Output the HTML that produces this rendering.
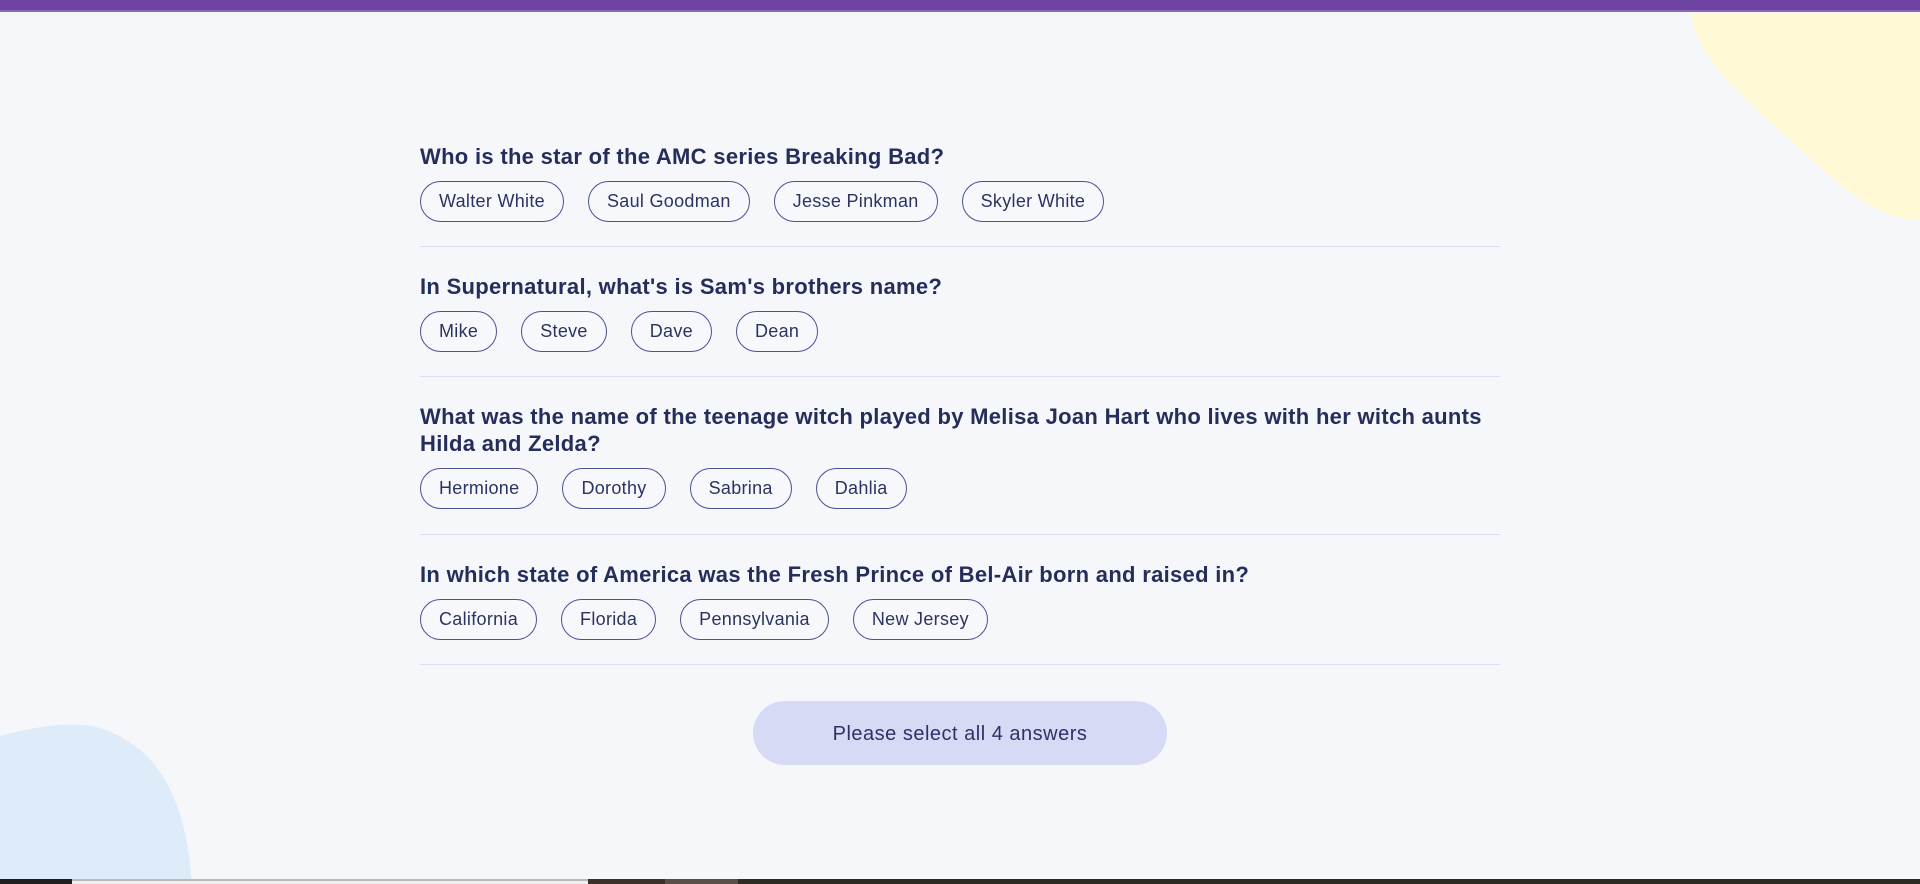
<!DOCTYPE html>
<html><head><meta charset="utf-8"><style>
*{margin:0;padding:0;box-sizing:border-box}
body{width:1920px;height:884px;overflow:hidden;background:#f5f7fb;position:relative;font-family:"Liberation Sans",sans-serif}
.bar{position:absolute;left:0;top:0;width:1920px;height:12px;background:#6d42a3;border-bottom:2px solid #8a66b8}
svg.bg{position:absolute;left:0;top:0}
.blk{position:absolute;left:420px;width:1080px;border-bottom:1px solid #d9def0}
.q{font-weight:bold;font-size:22px;line-height:27px;color:#252d5a;letter-spacing:0.3px;padding-top:1px}
.row{display:flex;gap:24px;margin-top:11px}
.p{height:41px;border:1px solid #4a5296;border-radius:21px;padding:0 18px;font-size:18px;letter-spacing:0.3px;line-height:39px;color:#2c3360;background:#f7f8fc}
.btn{position:absolute;left:753px;top:701px;width:414px;height:64px;border-radius:32px;background:#d6daf4;color:#2d3266;font-size:20px;letter-spacing:0.5px;line-height:66px;text-align:center}
.strip{position:absolute;top:879px;height:5px}
</style></head><body>
<svg class="bg" width="1920" height="884">
<path d="M1690 14 C1700 60 1740 95 1790 140 C1840 185 1870 218 1920 220 L1920 14 Z" fill="#fff9d6"/>
<path d="M0 736 C30 728 70 720 100 728 C160 748 186 800 192 884 L0 884 Z" fill="#deebf8"/>
</svg>
<div class="bar"></div>
<div class="blk" style="top:142px;height:105px"><div class="q">Who is the star of the AMC series Breaking Bad?</div><div class="row"><span class="p">Walter White</span><span class="p">Saul Goodman</span><span class="p">Jesse Pinkman</span><span class="p">Skyler White</span></div></div>
<div class="blk" style="top:272px;height:105px"><div class="q">In Supernatural, what's is Sam's brothers name?</div><div class="row"><span class="p">Mike</span><span class="p">Steve</span><span class="p">Dave</span><span class="p">Dean</span></div></div>
<div class="blk" style="top:402px;height:133px"><div class="q">What was the name of the teenage witch played by Melisa Joan Hart who lives with her witch aunts<br>Hilda and Zelda?</div><div class="row"><span class="p">Hermione</span><span class="p">Dorothy</span><span class="p">Sabrina</span><span class="p">Dahlia</span></div></div>
<div class="blk" style="top:560px;height:105px"><div class="q">In which state of America was the Fresh Prince of Bel-Air born and raised in?</div><div class="row"><span class="p">California</span><span class="p">Florida</span><span class="p">Pennsylvania</span><span class="p">New Jersey</span></div></div>
<div class="btn">Please select all 4 answers</div>
<div class="strip" style="left:0;width:72px;background:#1e1e1e"></div>
<div class="strip" style="left:72px;width:516px;background:#f0f0f0;border-top:2px solid #bbb"></div>
<div class="strip" style="left:588px;width:77px;background:#3a3228"></div>
<div class="strip" style="left:665px;width:73px;background:#5a5048"></div>
<div class="strip" style="left:738px;width:1182px;background:#2e2a24"></div>
</body></html>
